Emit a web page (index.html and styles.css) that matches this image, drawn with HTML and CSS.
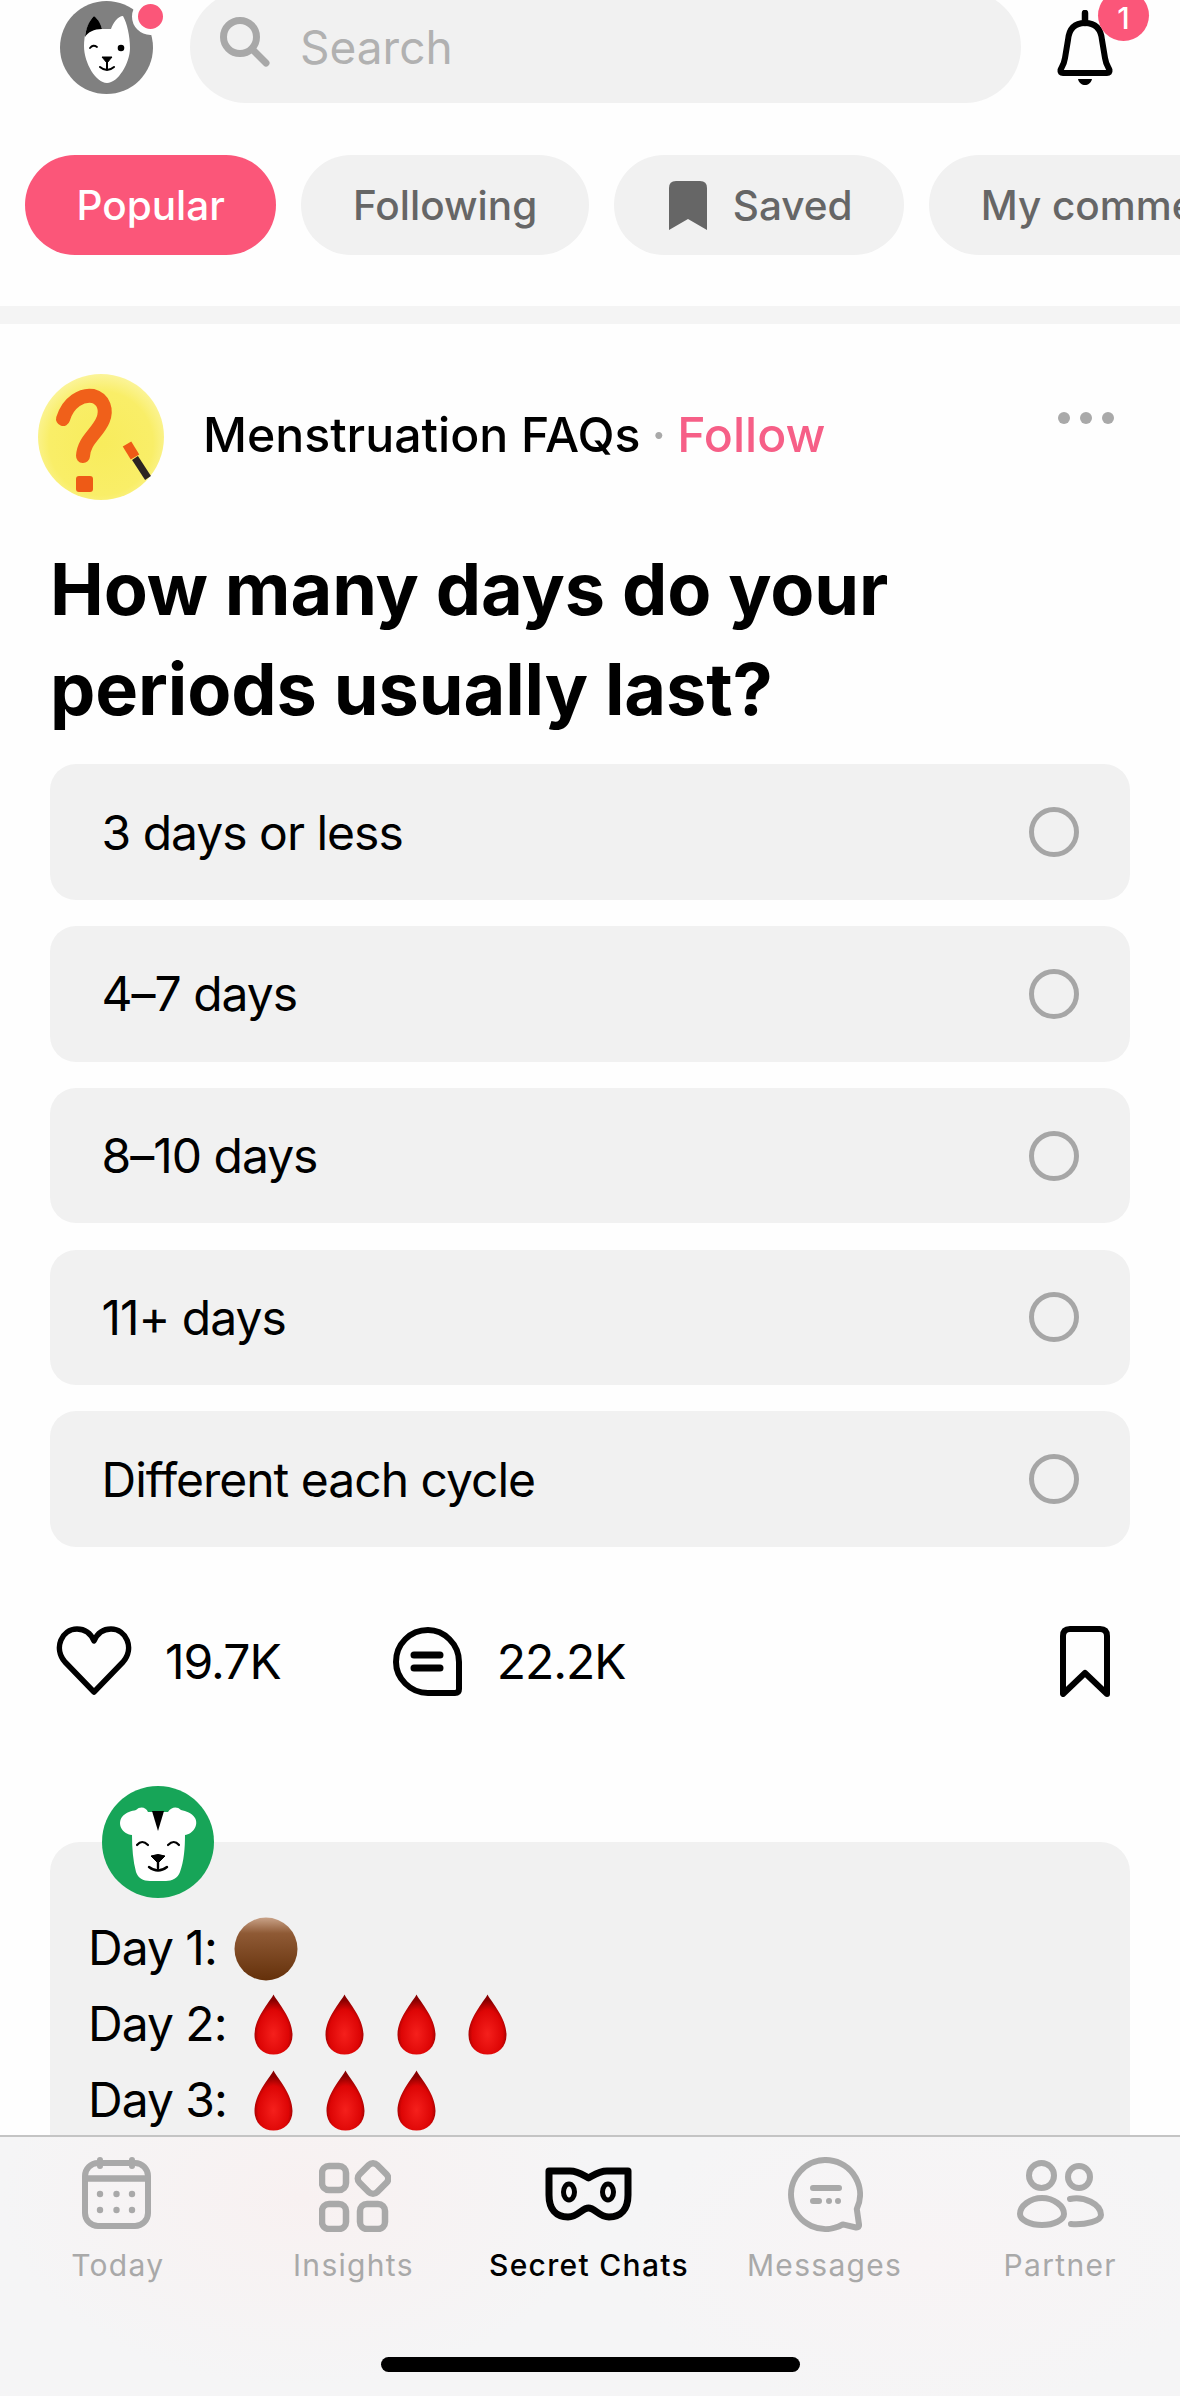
FILE: index.html
```html
<!DOCTYPE html>
<html lang="en">
<head>
<meta charset="utf-8">
<title>Secret Chats</title>
<link rel="stylesheet" href="styles.css">
</head>
<body>
<svg class="defs" width="0" height="0" aria-hidden="true">
  <defs>
    <radialGradient id="dropFill" cx="50%" cy="66%" r="56%">
      <stop offset="0" stop-color="#f5201c"/>
      <stop offset=".72" stop-color="#dd0505"/>
      <stop offset="1" stop-color="#8a0000"/>
    </radialGradient>
    <linearGradient id="ballFill" x1="0" y1="0" x2="0" y2="1">
      <stop offset="0" stop-color="#c9a288"/>
      <stop offset=".25" stop-color="#8f5a35"/>
      <stop offset="1" stop-color="#64300a"/>
    </linearGradient>
    <radialGradient id="sunFill" cx="50%" cy="55%" r="55%">
      <stop offset="0" stop-color="#f8ec5c"/>
      <stop offset=".75" stop-color="#f9ee68"/>
      <stop offset="1" stop-color="#fbf49a"/>
    </radialGradient>
    <symbol id="drop" viewBox="0 0 39 61">
      <path d="M19.500 0.500C24 9 38.500 24 38.500 41C38.500 53 30 60.500 19.500 60.500C9 60.500 0.500 53 0.500 41C0.500 24 15 9 19.500 0.500Z" fill="url(#dropFill)"/>
    </symbol>
  </defs>
</svg>

<div class="app">
  <header class="top">
    <div class="me">
      <svg class="me-face" viewBox="0 0 93 93">
        <circle cx="46.500" cy="46.500" r="46.500" fill="#808080"/>
        <path d="M24 45C24 35 27 22 34 15C38 18 41 24 42 28H51C53 22 58 15 63 15C67 22 70 35 70 47C70 62 58 82 47 82C36 82 24 62 24 45Z" fill="#fff"/>
        <path d="M25 36C26 27 29 20 34 15C39 19 41 24 42 28C34 28 28 31 25 36Z" fill="#000"/>
        <circle cx="61" cy="47" r="3.300" fill="#000"/>
        <path d="M30 47Q33 43 37 46" fill="none" stroke="#000" stroke-width="1.800" stroke-linecap="round"/>
        <path d="M42 56H52L47 62Z" fill="#000" stroke="#000" stroke-linejoin="round"/>
        <path d="M47 61V68M40 66Q47 72 54 66" fill="none" stroke="#000" stroke-width="2" stroke-linecap="round"/>
      </svg>
      <span class="me-dot"></span>
    </div>
    <div class="search">
      <svg class="search-icon" viewBox="0 0 50 50">
        <circle cx="20" cy="20" r="16.500" fill="none" stroke="#a8a8a8" stroke-width="7"/>
        <path d="M32 32L46 46" stroke="#a8a8a8" stroke-width="7" stroke-linecap="round"/>
      </svg>
      <span class="search-text">Search</span>
    </div>
    <div class="bell">
      <svg class="bell-icon" viewBox="0 0 56 75">
        <path d="M28 3V13" stroke="#000" stroke-width="6.500" stroke-linecap="round"/>
        <path d="M28 13C17 13 12 19 11 30L8 48C7 55 4 58 3.500 60Q3 63 6 63H50Q53 63 52.500 60C52 58 49 55 48 48L45 30C44 19 39 13 28 13Z" fill="none" stroke="#000" stroke-width="6" stroke-linejoin="round"/>
        <path d="M21 69H35C34 73 31 75 28 75C25 75 22 73 21 69Z" fill="#000"/>
      </svg>
      <span class="bell-badge">1</span>
    </div>
  </header>

  <nav class="chips">
    <span class="chip chip-on">Popular</span>
    <span class="chip">Following</span>
    <span class="chip">
      <svg class="chip-mark" viewBox="0 0 38 49"><path d="M0 7Q0 0 7 0H31Q38 0 38 7V49L19 38L0 49Z" fill="#666"/></svg>
      Saved
    </span>
    <span class="chip">My comments</span>
  </nav>

  <div class="band"></div>

  <main class="post">
    <div class="post-head">
      <svg class="post-avatar" viewBox="0 0 126 126">
        <circle cx="63" cy="63" r="63" fill="url(#sunFill)"/>
        <path d="M25 45C30 28 44 20 55 22C66 25 69 36 65 46C59 60 46 66 45 82" fill="none" stroke="#f0601a" stroke-width="14" stroke-linecap="round" stroke-linejoin="round"/>
        <rect x="38" y="102" width="17" height="16" rx="3" fill="#ee5a16"/>
        <path d="M89 70L97 83" stroke="#ee5a16" stroke-width="10"/>
        <path d="M97 84L110 104" stroke="#2c2422" stroke-width="7"/>
      </svg>
      <p class="post-source"><span class="post-name">Menstruation FAQs</span><span class="post-sep">·</span><span class="post-follow">Follow</span></p>
      <div class="more"><i></i><i></i><i></i></div>
    </div>

    <h1 class="title">How many days do your<br>periods usually last?</h1>

    <ul class="options">
      <li class="option">3 days or less<span class="radio"></span></li>
      <li class="option">4–7 days<span class="radio"></span></li>
      <li class="option">8–10 days<span class="radio"></span></li>
      <li class="option">11+ days<span class="radio"></span></li>
      <li class="option">Different each cycle<span class="radio"></span></li>
    </ul>

    <div class="actions">
      <svg class="act-heart" viewBox="0 0 76 70"><path d="M38 66L9 36C-3 22 6 3 21 3C29 3 35 8 38 15C41 8 47 3 55 3C70 3 79 22 67 36Z" fill="none" stroke="#000" stroke-width="5.500" stroke-linejoin="round"/></svg>
      <span class="act-count act-count-likes">19.7K</span>
      <svg class="act-comment" viewBox="0 0 69 69">
        <path d="M35 3C51 3 66 17 66 35V62Q66 66 62 66H35C17 66 3 51 3 35C3 17 17 3 35 3Z" fill="none" stroke="#000" stroke-width="6"/>
        <path d="M21 28H47M21 41H47" stroke="#000" stroke-width="7" stroke-linecap="round"/>
      </svg>
      <span class="act-count">22.2K</span>
      <svg class="act-save" viewBox="0 0 50 71"><path d="M3 68V10Q3 3 10 3H40Q47 3 47 10V68L25 47Z" fill="none" stroke="#000" stroke-width="6" stroke-linejoin="round"/></svg>
    </div>

    <section class="comment">
      <svg class="comment-avatar" viewBox="0 0 112 112">
        <circle cx="56" cy="56" r="56" fill="#17a558"/>
        <path d="M30 49C20 48 15 38 20 31C24 26 30 25 34 24C38 20 44 21 46 26H66C69 21 75 20 79 24C84 25 90 27 93 32C97 39 91 48 83 49C83 62 82 75 78 86C76 92 70 95 64 95H48C41 95 36 92 34 86C31 75 30 62 30 49Z" fill="#fff"/>
        <path d="M50 25H62L56 45Z" fill="#000"/>
        <path d="M35 59Q40 53 46 59M66 59Q72 53 77 59" fill="none" stroke="#000" stroke-width="2.200" stroke-linecap="round"/>
        <path d="M49 70Q56 67 63 70L56 77Z" fill="#000" stroke="#000" stroke-linejoin="round"/>
        <path d="M56 76V82M47 81Q56 88 65 81" fill="none" stroke="#000" stroke-width="2.400" stroke-linecap="round"/>
      </svg>
      <div class="day">Day 1:
        <svg class="ball" viewBox="0 0 64 64"><circle cx="32" cy="32" r="31.500" fill="url(#ballFill)"/></svg>
      </div>
      <div class="day">Day 2:
        <span class="drops">
          <svg class="drop"><use href="#drop"/></svg>
          <svg class="drop"><use href="#drop"/></svg>
          <svg class="drop"><use href="#drop"/></svg>
          <svg class="drop"><use href="#drop"/></svg>
        </span>
      </div>
      <div class="day">Day 3:
        <span class="drops">
          <svg class="drop"><use href="#drop"/></svg>
          <svg class="drop"><use href="#drop"/></svg>
          <svg class="drop"><use href="#drop"/></svg>
        </span>
      </div>
    </section>
  </main>

  <footer class="tabbar">
    <div class="tabs">
      <div class="tab">
        <span class="tab-icon">
          <svg class="ico-today" viewBox="0 0 69 72">
            <rect x="3" y="6" width="63" height="63" rx="13" fill="none" stroke="#a9a9a9" stroke-width="6"/>
            <path d="M3 21.500H66" stroke="#a9a9a9" stroke-width="6.500"/>
            <path d="M18 3V9M50 3V9" stroke="#a9a9a9" stroke-width="6" stroke-linecap="round"/>
            <g fill="#a9a9a9">
              <circle cx="18" cy="37" r="3.200"/><circle cx="34.500" cy="37" r="3.200"/><circle cx="50" cy="37" r="3.200"/>
              <circle cx="18" cy="53" r="3.200"/><circle cx="34.500" cy="53" r="3.200"/><circle cx="50" cy="53" r="3.200"/>
            </g>
          </svg>
        </span>
        <span class="tab-label">Today</span>
      </div>
      <div class="tab">
        <span class="tab-icon">
          <svg class="ico-insights" viewBox="0 0 72 72">
            <g fill="none" stroke="#a9a9a9" stroke-width="6.500">
              <rect x="3" y="6" width="24" height="24" rx="7"/>
              <rect x="3" y="44" width="24" height="25" rx="7"/>
              <rect x="41" y="44" width="25" height="25" rx="7"/>
              <rect x="41.500" y="6" width="25" height="25" rx="6" transform="rotate(45 54 18.500)"/>
            </g>
          </svg>
        </span>
        <span class="tab-label">Insights</span>
      </div>
      <div class="tab tab-on">
        <span class="tab-icon">
          <svg class="ico-secret" viewBox="0 0 87 54">
            <path d="M4 4H25C33 4 38 8 43.500 11C49 8 54 4 62 4H83V28C83 42 76 50 64 50C54 50 50 41 43.500 41C37 41 33 50 23 50C11 50 4 42 4 28Z" fill="none" stroke="#000" stroke-width="7" stroke-linejoin="round"/>
            <ellipse cx="24" cy="25" rx="5.500" ry="8" fill="none" stroke="#000" stroke-width="5"/>
            <ellipse cx="63" cy="25" rx="5.500" ry="8" fill="none" stroke="#000" stroke-width="5"/>
          </svg>
        </span>
        <span class="tab-label">Secret Chats</span>
      </div>
      <div class="tab">
        <span class="tab-icon">
          <svg class="ico-messages" viewBox="0 0 75 75">
            <path d="M54.750 67.400A34.500 34.500 0 1 1 68.800 52.100L71 67.500Q71.500 71 68 70.500Z" fill="none" stroke="#a9a9a9" stroke-width="6" stroke-linejoin="round"/>
            <path d="M25 31H51M25 44H31" stroke="#a9a9a9" stroke-width="6" stroke-linecap="round"/>
            <circle cx="41" cy="44" r="3" fill="#a9a9a9"/><circle cx="50" cy="44" r="3" fill="#a9a9a9"/>
          </svg>
        </span>
        <span class="tab-label">Messages</span>
      </div>
      <div class="tab">
        <span class="tab-icon">
          <svg class="ico-partner" viewBox="0 0 88 71">
            <g fill="none" stroke="#a9a9a9" stroke-width="6" stroke-linecap="round" stroke-linejoin="round">
              <circle cx="25.500" cy="15.500" r="12.500"/>
              <circle cx="63" cy="17" r="11"/>
              <path d="M26 38C38 38 48 46 48 54C48 60 38 65 26 65C14 65 4 60 4 54C4 46 14 38 26 38Z"/>
              <path d="M54 39C68 36 85 44 85 55C85 61 70 65 55 64"/>
            </g>
          </svg>
        </span>
        <span class="tab-label">Partner</span>
      </div>
    </div>
    <div class="home-bar"></div>
  </footer>
</div>
</body>
</html>
```

FILE: styles.css
```css
* { box-sizing: border-box; }

html, body {
  margin: 0;
  padding: 0;
  background: #fefefe;
}

body {
  font-family: "Inter", "Liberation Sans", sans-serif;
  color: #000;
}

.defs { position: absolute; }

.app {
  position: relative;
  width: 1180px;
  height: 2396px;
  overflow: hidden;
  background: #fefefe;
}

/* top bar */
.top {
  display: flex;
  align-items: center;
  height: 112px;
  margin-top: -9px;
  padding-left: 60px;
}

.me {
  position: relative;
  width: 93px;
  height: 93px;
  flex: none;
}

.me-face { display: block; width: 93px; height: 93px; }

.me-dot {
  position: absolute;
  top: -3px;
  left: 72px;
  width: 37px;
  height: 37px;
  border: 6px solid #fefefe;
  border-radius: 50%;
  background: #fb5679;
}

.search {
  display: flex;
  align-items: center;
  width: 831px;
  height: 112px;
  margin-left: 37px;
  padding-left: 30px;
  border-radius: 56px;
  background: #f1f1f1;
}

.search-icon { width: 50px; height: 50px; margin-top: -10px; flex: none; }

.search-text {
  margin-left: 30px;
  font-size: 46px;
  color: #b1b1b1;
}

.bell {
  position: relative;
  width: 56px;
  height: 75px;
  margin-left: 36px;
  flex: none;
}

.bell-icon { display: block; width: 56px; height: 75px; }

.bell-badge {
  position: absolute;
  top: -20px;
  left: 41px;
  display: flex;
  align-items: center;
  justify-content: center;
  width: 51px;
  height: 51px;
  padding-top: 5px;
  border-radius: 50%;
  background: #fb5679;
  color: #fff;
  font-size: 30px;
  font-weight: 500;
  line-height: 30px;
}

/* filter chips */
.chips {
  display: flex;
  gap: 25px;
  height: 100px;
  margin-top: 52px;
  padding-left: 25px;
  overflow: hidden;
}

.chip {
  display: flex;
  align-items: center;
  justify-content: center;
  flex: none;
  height: 100px;
  padding: 0 51.500px;
  border-radius: 50px;
  background: #f1f1f1;
  color: #666;
  font-size: 40.500px;
  font-weight: 500;
  white-space: nowrap;
}

.chip-on { background: #fb5679; color: #fff; }

.chip-mark { width: 38px; height: 49px; margin-left: 4px; margin-right: 25.500px; flex: none; }

.band {
  height: 18px;
  margin-top: 51px;
  background: #f4f4f4;
}

/* post */
.post { padding: 0 50px; }

.post-head {
  display: flex;
  align-items: center;
  height: 127px;
  margin-top: 49px;
  margin-left: -12px;
}

.post-avatar { width: 126px; height: 126px; flex: none; }

.post-source {
  margin: 0 0 5px 39px;
  font-size: 48.200px;
  font-weight: 500;
  white-space: nowrap;
}

.post-sep { margin: 0 11px; color: #a9a9a9; }

.post-follow { color: #f65f87; }

.more {
  display: flex;
  gap: 10px;
  align-self: flex-start;
  margin-top: 39px;
  margin-left: auto;
  margin-right: 16px;
}

.more i {
  display: block;
  width: 12px;
  height: 12px;
  border-radius: 50%;
  background: #a9a9a9;
}

.title {
  margin: 39px 0 25.300px;
  font-size: 72px;
  font-weight: 700;
  line-height: 100px;
  letter-spacing: -0.100px;
}

.options {
  display: flex;
  flex-direction: column;
  gap: 26.250px;
  margin: 0;
  padding: 0;
  list-style: none;
}

.option {
  display: flex;
  align-items: center;
  justify-content: space-between;
  height: 135.500px;
  padding: 0 51px 0 51.500px;
  border-radius: 26px;
  background: #f1f1f1;
  font-size: 48px;
  letter-spacing: -1px;
}

.radio {
  width: 50px;
  height: 50px;
  border: 5px solid #a6a6a6;
  border-radius: 50%;
}

/* actions */
.actions {
  display: flex;
  align-items: center;
  height: 72px;
  margin-top: 78.500px;
  padding-left: 6px;
}

.act-heart { width: 76px; height: 70px; flex: none; }
.act-comment { width: 69px; height: 69px; flex: none; }
.act-save { width: 50px; height: 71px; flex: none; margin-left: auto; margin-right: 20px; }

.act-count {
  margin-left: 35px;
  font-size: 48px;
  letter-spacing: -1px;
}

.act-count-likes { margin-left: 33px; margin-right: 112px; }

/* comment card */
.comment {
  position: relative;
  margin-top: 145px;
  padding: 67px 38px 80px;
  border-radius: 30px;
  background: #f1f1f1;
}

.comment-avatar {
  position: absolute;
  top: -56px;
  left: 52px;
  width: 112px;
  height: 112px;
}

.day {
  display: flex;
  align-items: center;
  height: 76px;
  font-size: 48px;
  letter-spacing: -1px;
}

.ball { width: 64px; height: 64px; margin-top: 3px; margin-left: 17px; flex: none; }

.drops {
  display: flex;
  gap: 32.400px;
  margin-top: 2px;
  margin-left: 27.500px;
}

.drop { width: 39px; height: 61px; flex: none; }

/* bottom tab bar */
.tabbar {
  position: absolute;
  left: 0;
  right: 0;
  bottom: 0;
  height: 261px;
  border-top: 2px solid #c4c4c4;
  background:
    radial-gradient(ellipse 300px 190px at 300px 60px, #f8f1f1, rgba(248, 241, 241, 0)),
    radial-gradient(ellipse 300px 160px at 920px 120px, #f8f4f5, rgba(248, 244, 245, 0)),
    #f5f5f6;
}

.tabs {
  display: grid;
  grid-template-columns: repeat(5, 1fr);
  padding-top: 17px;
  padding-right: 2px;
}

.tab {
  display: flex;
  flex-direction: column;
  align-items: center;
}

.tab-icon {
  display: flex;
  align-items: center;
  justify-content: center;
  height: 80px;
}

.ico-today { width: 69px; height: 72px; margin-right: 3px; margin-bottom: 2px; }
.ico-insights { width: 72px; height: 72px; margin-left: 3px; margin-top: 4px; }
.ico-secret { width: 87px; height: 54px; }
.ico-messages { width: 75px; height: 75px; margin-left: 2px; }
.ico-partner { width: 88px; height: 71px; margin-top: 2px; }

.tab-label {
  margin-top: 11px;
  font-size: 30px;
  line-height: 40px;
  letter-spacing: 1.300px;
  color: #a9a9a9;
}

.tab-on .tab-label { color: #000; font-weight: 500; }

.home-bar {
  width: 419px;
  height: 15px;
  margin: 72px auto 0;
  border-radius: 8px;
  background: #000;
}
```
